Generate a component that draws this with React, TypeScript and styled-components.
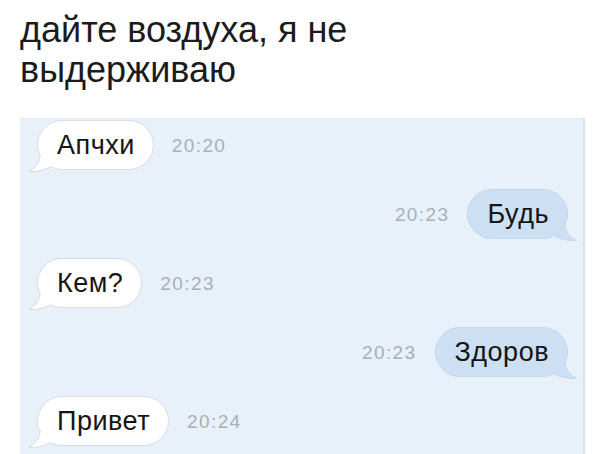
import styled, { createGlobalStyle } from "styled-components";

const GlobalStyle = createGlobalStyle`
  html, body {
    margin: 0;
    padding: 0;
    background: #ffffff;
  }
  body {
    font-family: "Liberation Sans", Arial, sans-serif;
    color: #1b1b1b;
  }
`;

const Page = styled.div`
  width: 604px;
  height: 454px;
  overflow: hidden;
  display: flex;
  flex-direction: column;
`;

const Caption = styled.h1`
  margin: 0;
  padding: 10px 20px 0 20px;
  font-size: 36px;
  font-weight: 400;
  line-height: 40px;
  color: #1b1b1b;
`;

const Chat = styled.div`
  margin: 28px 19px 0 20px;
  flex: 1;
  background: #e8f1f9;
  border-top: 1px solid #e2e9ef;
  border-right: 2px solid #d9e3ec;
  padding: 1px 15px 0 17px;
  display: flex;
  flex-direction: column;
  gap: 19px;
  overflow: hidden;
`;

const Row = styled.div<{ $out?: boolean }>`
  display: flex;
  align-items: center;
  justify-content: ${(p) => (p.$out ? "flex-end" : "flex-start")};
  gap: 18px;
`;

const Bubble = styled.div<{ $out?: boolean }>`
  position: relative;
  height: 50px;
  box-sizing: border-box;
  padding: 0 18px 0 19px;
  border-radius: 25px;
  display: flex;
  align-items: center;
  font-size: 27px;
  letter-spacing: 0.5px;
  color: #151515;
  background: ${(p) => (p.$out ? "#cddff2" : "#ffffff")};
  border: 1px solid ${(p) => (p.$out ? "#c4d7ec" : "#d6dce2")};
`;

const Time = styled.span`
  font-size: 19px;
  letter-spacing: 1.4px;
  color: #a9afb6;
  padding-top: 2px;
`;

const TailSvg = styled.svg<{ $out?: boolean }>`
  position: absolute;
  bottom: -5px;
  width: 30px;
  height: 25px;
  overflow: visible;
  ${(p) => (p.$out ? "right: -11px; transform: scaleX(-1);" : "left: -11px;")}
`;

const Tail = ({ out }: { out?: boolean }) => {
  const fill = out ? "#cddff2" : "#ffffff";
  const stroke = out ? "#c4d7ec" : "#d6dce2";
  return (
    <TailSvg $out={out} viewBox="0 0 30 25">
      <path
        d="M13.2 5 C12.8 13 9 19 1.5 22.5 C9 23 16 21.5 23 18.2 L26 6 Z"
        fill={fill}
      />
      <path
        d="M13.2 5 C12.8 13 9 19 1.5 22.5 C9 23 16 21.5 23 18.2"
        fill="none"
        stroke={stroke}
        strokeWidth="1"
      />
    </TailSvg>
  );
};

const messages = [
  { text: "Апчхи", time: "20:20", out: false },
  { text: "Будь", time: "20:23", out: true },
  { text: "Кем?", time: "20:23", out: false },
  { text: "Здоров", time: "20:23", out: true },
  { text: "Привет", time: "20:24", out: false },
];

export default function App() {
  return (
    <>
      <GlobalStyle />
      <Page>
        <Caption>
          дайте воздуха, я не
          <br />
          выдерживаю
        </Caption>
        <Chat>
          {messages.map((m, i) =>
            m.out ? (
              <Row key={i} $out>
                <Time>{m.time}</Time>
                <Bubble $out>
                  {m.text}
                  <Tail out />
                </Bubble>
              </Row>
            ) : (
              <Row key={i}>
                <Bubble>
                  {m.text}
                  <Tail />
                </Bubble>
                <Time>{m.time}</Time>
              </Row>
            )
          )}
        </Chat>
      </Page>
    </>
  );
}
